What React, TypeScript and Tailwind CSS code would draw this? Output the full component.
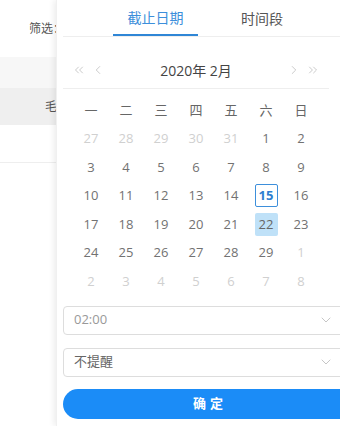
import React from 'react';
import { ChevronDown, ChevronLeft, ChevronRight, ChevronsLeft, ChevronsRight } from 'lucide-react';

const weekDays = ['一', '二', '三', '四', '五', '六', '日'];

// February 2020, week starts on Monday
const days: { d: number; muted?: boolean }[] = [
    ...[27, 28, 29, 30, 31].map((d) => ({ d, muted: true })),
    ...Array.from({ length: 29 }, (_, i) => ({ d: i + 1 })),
    ...[1, 2, 3, 4, 5, 6, 7, 8].map((d) => ({ d, muted: true }))
];

const font = { fontFamily: '"Open Sans", "Noto Sans CJK SC", sans-serif' };

const DayCell: React.FC<{ d: number; muted?: boolean; index: number }> = ({ d, muted, index }) => {
    const isToday = !muted && d === 15 && index < 30;
    const isPicked = !muted && d === 22;
    return (
        <div className="h-[28.5px] flex items-center justify-center">
            <div
                className={
                    isToday
                        ? 'w-[23px] h-[23px] flex items-center justify-center rounded-[2px] border border-[#3d8fdb] text-[#2f7fd0] font-bold'
                        : isPicked
                          ? 'w-[23px] h-[23px] flex items-center justify-center rounded-[2px] bg-[#bfe1f8] text-[#666]'
                          : muted
                            ? 'w-[23px] h-[23px] flex items-center justify-center text-[#d0d0d0]'
                            : 'w-[23px] h-[23px] flex items-center justify-center text-[#727272]'
                }
            >
                {d}
            </div>
        </div>
    );
};

export default function App() {
    return (
        <div className="relative w-[340px] h-[426px] overflow-hidden bg-white text-[13px]" style={font}>
            {/* page underneath */}
            <div className="flex flex-col">
                <div className="h-[57px] flex items-center pl-[29px] text-[12px] text-[#555]">筛选：</div>
                <div className="h-[31px] bg-[#f7f7f7]"></div>
                <div className="h-[37px] bg-[#efefef] flex items-center pl-[45px] text-[12px] text-[#555]">毛巾</div>
                <div className="h-[38px] border-b border-[#eeeeee]"></div>
            </div>

            {/* picker panel */}
            <div className="absolute top-0 left-[56px] w-[300px] h-full bg-white shadow-[-2px_0_6px_rgba(0,0,0,0.08)] border-l border-[#f0f0f0] pl-[6px] pr-[6px]">
                <div className="h-[37px] flex pl-[50px] gap-[21px] border-b border-[#eeeeee]">
                    <div className="w-[85px] flex items-center justify-center text-[14px] text-[#3d8fdb] border-b-2 border-[#2f86d6] pt-[1px]">
                        截止日期
                    </div>
                    <div className="w-[86px] flex items-center justify-center text-[14px] text-[#555]">时间段</div>
                </div>

                <div className="w-[266px]">
                    <div className="mt-[15px] h-[37px] flex items-center border-b border-[#eeeeee] px-[9px] text-[#b4b4b4]">
                        <ChevronsLeft size={14} strokeWidth={1.2} />
                        <ChevronLeft size={14} strokeWidth={1.2} className="ml-[5px]" />
                        <div className="flex-1 text-center text-[14px] text-[#444]">2020年 2月</div>
                        <ChevronRight size={14} strokeWidth={1.2} />
                        <ChevronsRight size={14} strokeWidth={1.2} className="ml-[5px]" />
                    </div>

                    <div className="mt-[7px] ml-[10.5px] w-[245px] grid grid-cols-7">
                        {weekDays.map((w) => (
                            <div key={w} className="h-[28.5px] flex items-center justify-center text-[#666]">
                                {w}
                            </div>
                        ))}
                        {days.map((x, i) => (
                            <DayCell key={i} d={x.d} muted={x.muted} index={i} />
                        ))}
                    </div>
                </div>

                <div className="mt-[10px] flex flex-col gap-[13px] w-[290px]">
                    <div className="h-[29px] flex items-center justify-between border border-[#dddddd] rounded-[4px] pl-[10px] pr-[18px]">
                        <span className="text-[#999]">02:00</span>
                        <ChevronDown size={16} strokeWidth={1.2} className="text-[#b8b8b8]" />
                    </div>
                    <div className="h-[29px] flex items-center justify-between border border-[#dddddd] rounded-[4px] pl-[10px] pr-[18px]">
                        <span className="text-[#666]">不提醒</span>
                        <ChevronDown size={16} strokeWidth={1.2} className="text-[#b8b8b8]" />
                    </div>
                    <button className="-mt-[1px] h-[30px] rounded-full bg-[#1b8cf7] text-white font-bold text-[13px] tracking-[4px] pl-[4px]">
                        确定
                    </button>
                </div>
            </div>
        </div>
    );
}
